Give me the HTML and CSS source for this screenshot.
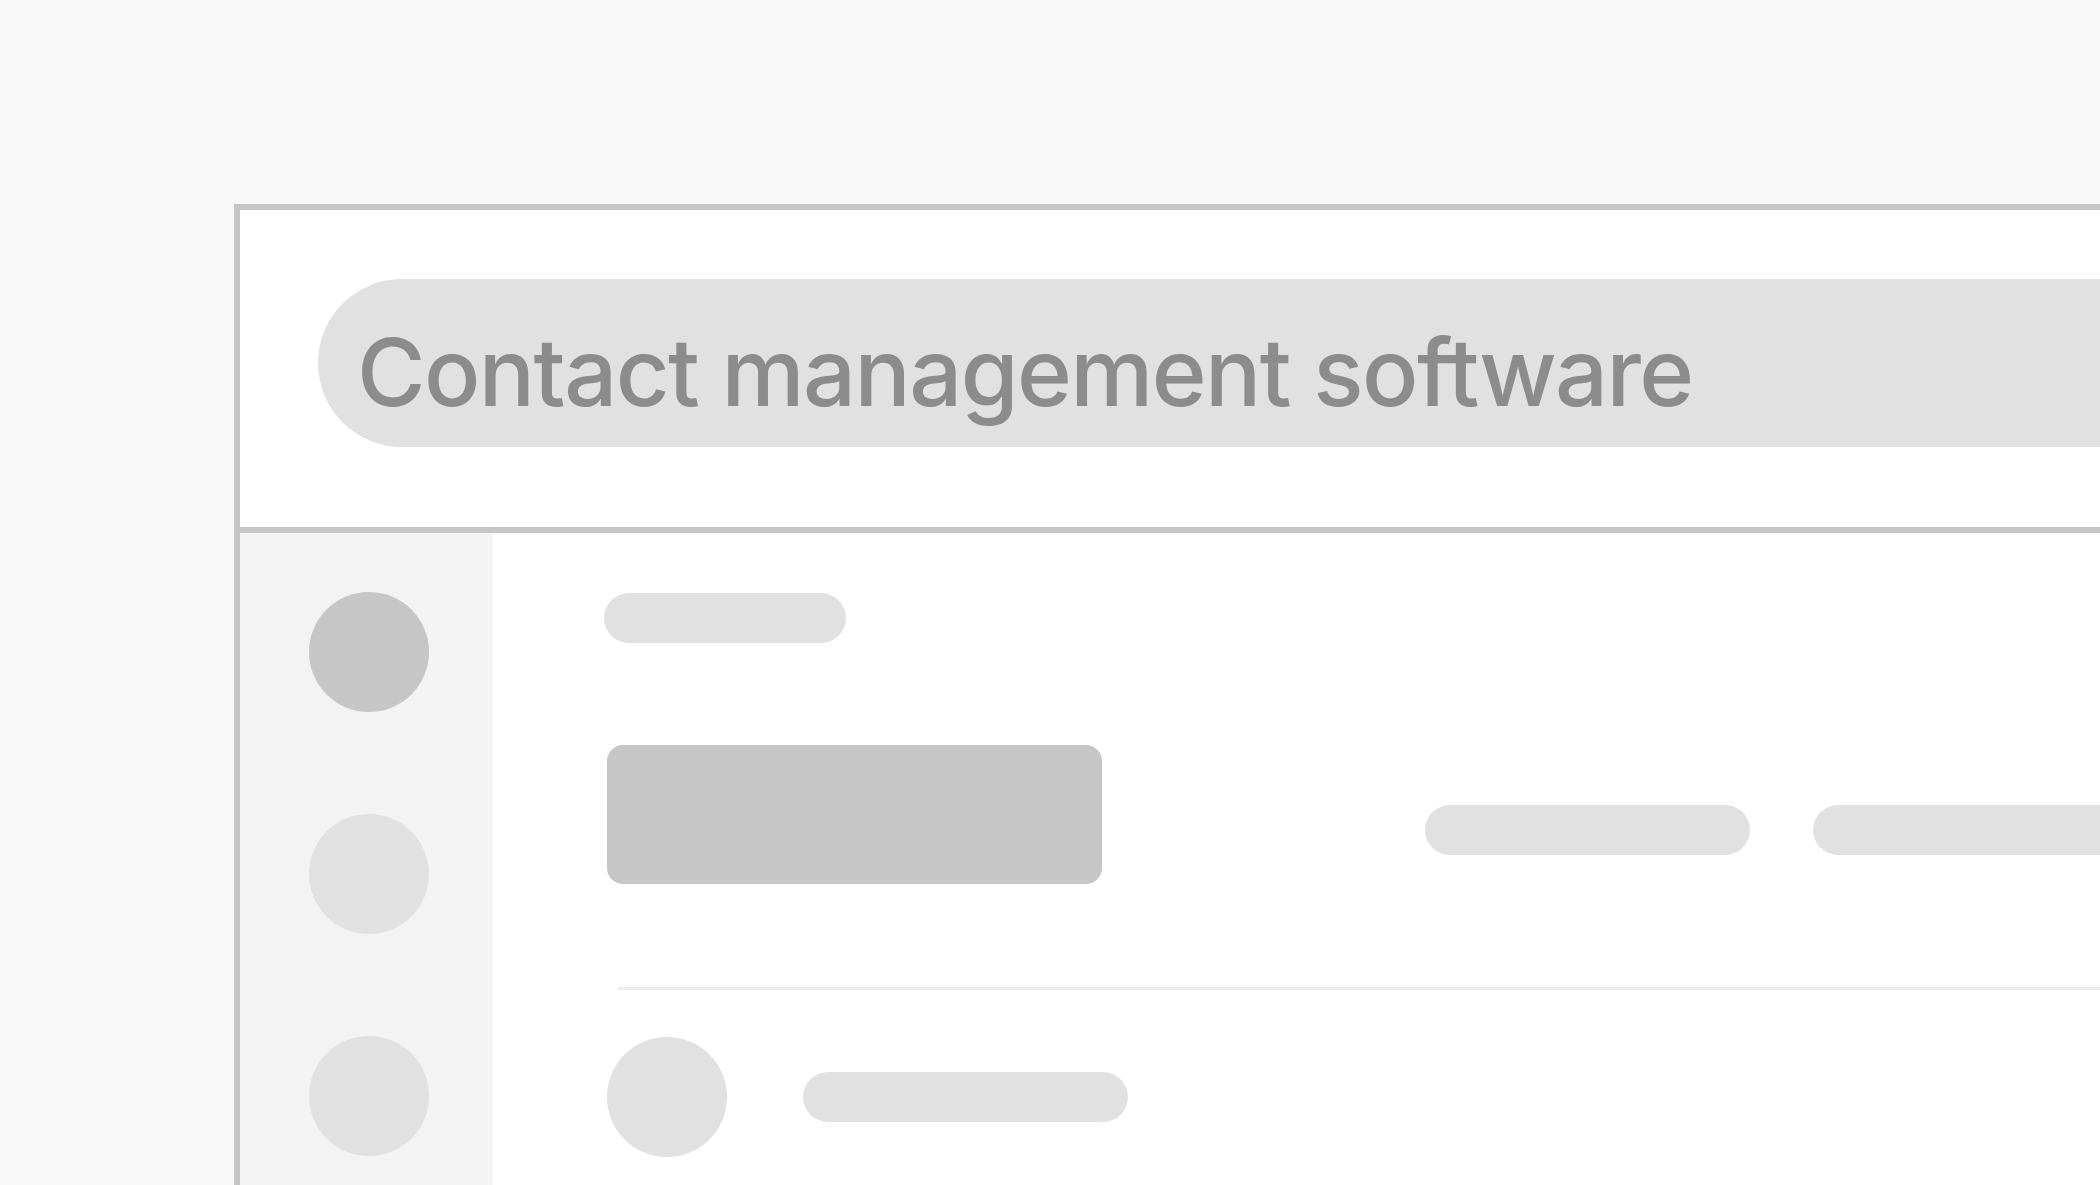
FILE: index.html
```html
<!DOCTYPE html>
<html lang="en">
<head>
<meta charset="utf-8">
<title>Contact management software</title>
<link rel="stylesheet" href="styles.css">
</head>
<body>
<div class="frame">
  <header class="header">
    <div class="search">Contact management software</div>
  </header>
  <div class="content">
    <aside class="sidebar">
      <div class="dot dot-dark"></div>
      <div class="dot"></div>
      <div class="dot"></div>
    </aside>
    <main class="main">
      <div class="bar bar-title"></div>
      <div class="row row-hero">
        <div class="block"></div>
        <div class="bar bar-wide bar-first"></div>
        <div class="bar bar-wide"></div>
      </div>
      <div class="divider"></div>
      <div class="row row-item">
        <div class="dot"></div>
        <div class="bar bar-wide"></div>
      </div>
    </main>
  </div>
</div>
</body>
</html>
```

FILE: styles.css
```css
html, body {
  margin: 0;
  padding: 0;
  width: 100%;
  height: 100%;
  overflow: hidden;
}

body {
  background: #f8f8f8;
  padding: 204px 0 0 234px;
  box-sizing: border-box;
  font-family: Inter, "Liberation Sans", sans-serif;
}

.frame {
  width: 1866px;
  height: 981px;
  box-sizing: border-box;
  overflow: hidden;
  background: #ffffff;
  border-left: 6px solid #c6c6c6;
  border-top: 6px solid #c6c6c6;
  display: flex;
  flex-direction: column;
}

.header {
  height: 323px;
  box-sizing: border-box;
  border-bottom: 6px solid #c6c6c6;
  padding: 69px 0 0 78px;
  flex: none;
}

.search {
  height: 168px;
  box-sizing: border-box;
  padding: 18px 0 0 39px;
  line-height: 150px;
  border-radius: 84px 0 0 84px;
  background: #e1e1e1;
  color: #8c8c8c;
  font-size: 93.5px;
  font-weight: 500;
  letter-spacing: -1.6px;
  white-space: nowrap;
}

.content {
  display: flex;
  flex: 1;
  min-height: 0;
}

.sidebar {
  width: 253px;
  background: #f3f3f3;
  display: flex;
  flex-direction: column;
  gap: 102px;
  padding: 59px 0 0 69px;
  box-sizing: border-box;
  flex: none;
}

.dot {
  width: 120px;
  height: 120px;
  border-radius: 50%;
  background: #e1e1e1;
  flex: none;
}

.dot-dark {
  background: #c6c6c6;
}

.main {
  flex: 1;
  padding-top: 60px;
}

.bar {
  height: 50px;
  border-radius: 25px;
  background: #e1e1e1;
  flex: none;
}

.bar-title {
  width: 242px;
  margin-left: 111px;
}

.bar-wide {
  width: 325px;
}

.row {
  display: flex;
  margin-left: 114px;
}

.row-hero {
  margin-top: 102px;
  align-items: flex-start;
  gap: 63px;
}

.row-hero .bar {
  margin-top: 60px;
}

.row-hero .bar-first {
  margin-left: 260px;
}

.block {
  width: 495px;
  height: 139px;
  border-radius: 16px;
  background: #c6c6c6;
  flex: none;
}

.divider {
  margin: 103px 0 0 125px;
  height: 3px;
  background: #ededed;
}

.row-item {
  margin-top: 47px;
  align-items: center;
  gap: 76px;
}
```
